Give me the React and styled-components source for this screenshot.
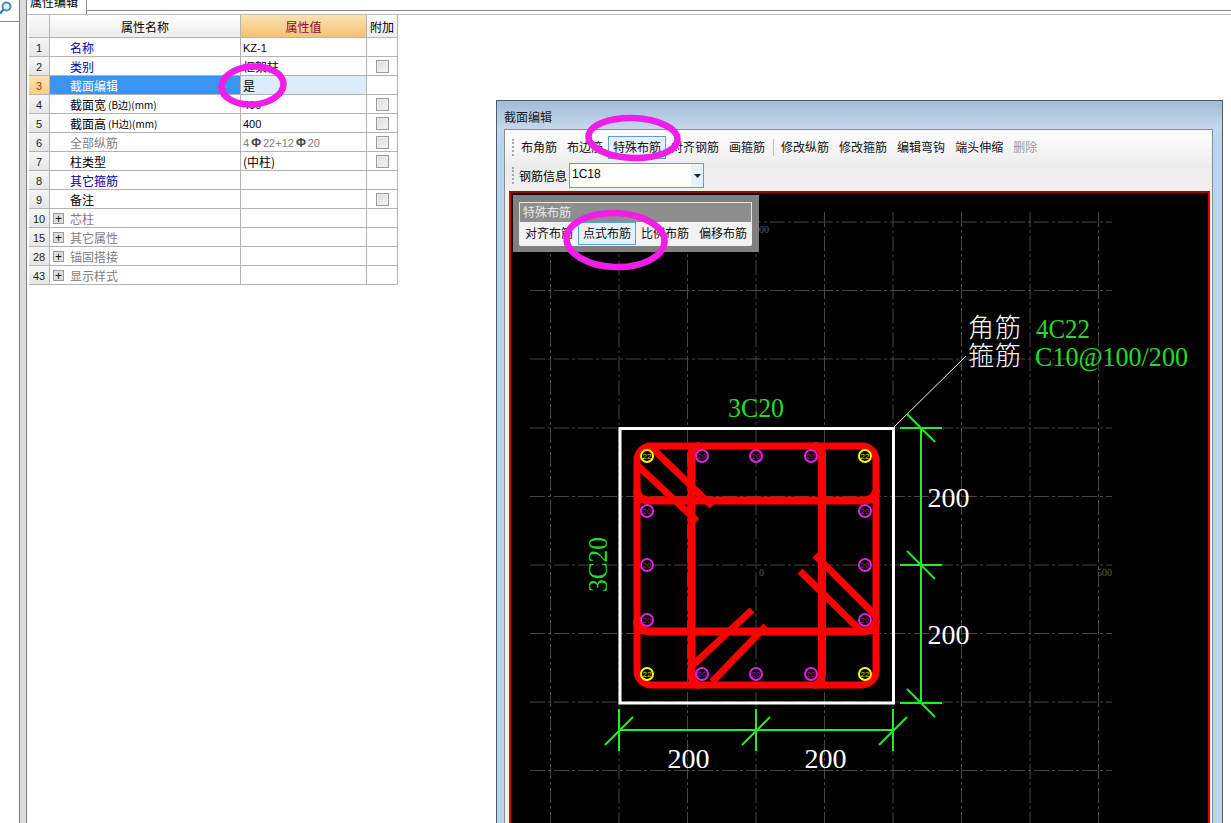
import styled, { createGlobalStyle } from "styled-components";

const CJK = `"Noto Sans CJK SC", "Liberation Sans", sans-serif`;
const LATIN = `"Liberation Sans", sans-serif`;

const GlobalStyle = createGlobalStyle`
  html, body {
    margin: 0;
    padding: 0;
    background: #fff;
    overflow: hidden;
  }
  * { box-sizing: border-box; }
`;

const rows = [
  { no: "1", name: "名称", tone: "link", value: "KZ-1", latin: true },
  { no: "2", name: "类别", tone: "link", value: "框架柱", check: true },
  { no: "3", name: "截面编辑", selected: true, value: "是" },
  { no: "4", name: "截面宽", unit: "(B边)(mm)", value: "400", latin: true, check: true },
  { no: "5", name: "截面高", unit: "(H边)(mm)", value: "400", latin: true, check: true },
  { no: "6", name: "全部纵筋", tone: "muted", rebar: true, check: true },
  { no: "7", name: "柱类型", value: "(中柱)", check: true },
  { no: "8", name: "其它箍筋", tone: "link" },
  { no: "9", name: "备注", check: true },
  { no: "10", name: "芯柱", tone: "muted", group: true },
  { no: "15", name: "其它属性", tone: "muted", group: true },
  { no: "28", name: "锚固搭接", tone: "muted", group: true },
  { no: "43", name: "显示样式", tone: "muted", group: true },
];

const toneColors = { link: "#0000a8", muted: "#808080" };

const firstBar = ["布角筋", "布边筋", "特殊布筋", "对齐钢筋", "画箍筋"];
const secondBar = ["修改纵筋", "修改箍筋", "编辑弯钩", "端头伸缩"];
const panelItems = ["对齐布筋", "点式布筋", "比例布筋", "偏移布筋"];

const gridX = [550.5, 619, 687.5, 756, 824.5, 893, 961.5, 1030, 1098.5];
const gridY = [222, 290.5, 359, 428, 496.5, 565, 633.5, 702, 770.5];
const barX = [647, 702, 756, 811, 865];
const barY = [456, 511, 565, 620, 674];

const bars = barY.flatMap((y, r) =>
  barX
    .map((x, c) => ({ x, y, r, c }))
    .filter((b) => b.r === 0 || b.r === 4 || b.c === 0 || b.c === 4)
);

const stirrupLegs = [
  "M691.5 452V672Q691.5 685 700 685",
  "M822 452V672Q822 685 814 685",
  "M700 446Q691.5 446 691.5 456",
  "M814 446Q822 446 822 456",
  "M650 500.5H862Q876 500.5 876 490",
  "M637 490Q637 500.5 650 500.5",
  "M650 631.5H862Q876 631.5 876 620",
  "M637 620Q637 631.5 650 631.5",
];

const hookLines = [
  [650, 446, 712, 506],
  [637, 465, 697, 521],
  [815, 555, 876, 616],
  [800, 571, 862, 632],
  [752, 610, 693, 665],
  [766, 626, 712, 682],
];

const greenLines = [
  [921, 428, 921, 703],
  [900, 428, 942, 428],
  [900, 565, 942, 565],
  [900, 703, 942, 703],
  [907, 414, 935, 442],
  [907, 551, 935, 579],
  [907, 689, 935, 717],
  [619, 730, 893, 730],
  [619, 709, 619, 751],
  [756, 709, 756, 751],
  [893, 709, 893, 751],
  [605, 745, 633, 717],
  [742, 745, 770, 717],
  [879, 745, 907, 717],
];

const App = () => (
  <>
    <GlobalStyle />
    <Page>
      <SideRail>
        <SearchBox>
          <svg width="14" height="14" viewBox="0 0 14 14">
            <circle cx="6.5" cy="5.5" r="4" fill="#e4f1fb" stroke="#3d8fc4" strokeWidth="2" />
            <path d="M3.5 8.5L0 12.5" stroke="#2f7fb8" strokeWidth="2.4" />
          </svg>
        </SearchBox>
      </SideRail>
      <RailGutter />
      <Main>
        <TabStrip>
          <Tab>属性编辑</Tab>
          <TabLine />
        </TabStrip>
        <Workspace>
          <PropertyGrid>
            <HeadCell $kind="corner" />
            <HeadCell>属性名称</HeadCell>
            <HeadCell $kind="active">属性值</HeadCell>
            <HeadCell>附加</HeadCell>
            {rows.map((row) => (
              <PropertyRow key={row.no} row={row} />
            ))}
          </PropertyGrid>
          <Dialog>
            <DialogTitle>截面编辑</DialogTitle>
            <DialogBody>
              <Toolbar>
                <BarRow>
                  <Grip />
                  {firstBar.map((label) => (
                    <ToolButton key={label} $active={label === "特殊布筋"}>
                      {label}
                    </ToolButton>
                  ))}
                  <BarDivider />
                  {secondBar.map((label) => (
                    <ToolButton key={label}>{label}</ToolButton>
                  ))}
                  <ToolButton $disabled>删除</ToolButton>
                </BarRow>
                <ComboRow>
                  <Grip />
                  <ComboLabel>钢筋信息</ComboLabel>
                  <Combo>
                    <ComboValue>1C18</ComboValue>
                    <ComboArrow>
                      <svg width="7" height="4" viewBox="0 0 7 4">
                        <path d="M0 0H7L3.5 4Z" fill="#222" />
                      </svg>
                    </ComboArrow>
                  </Combo>
                </ComboRow>
              </Toolbar>
              <CanvasFrame>
                <SectionDrawing />
                <FloatPanel>
                  <FloatTitle>特殊布筋</FloatTitle>
                  <FloatItems>
                    {panelItems.map((label) => (
                      <ToolButton key={label} $active={label === "点式布筋"}>
                        {label}
                      </ToolButton>
                    ))}
                  </FloatItems>
                </FloatPanel>
              </CanvasFrame>
            </DialogBody>
          </Dialog>
        </Workspace>
      </Main>
      <Markup width="1231" height="823" viewBox="0 0 1231 823">
        <ellipse cx="252.5" cy="85.5" rx="31" ry="19" transform="rotate(-4 252.5 85.5)" />
        <ellipse cx="633" cy="138" rx="44.5" ry="20" transform="rotate(2 633 138)" />
        <ellipse cx="615.5" cy="240" rx="49" ry="27" transform="rotate(2 615.5 240)" />
      </Markup>
    </Page>
  </>
);

const PropertyRow = ({ row }) => (
  <>
    <NumberCell $selected={row.selected}>{row.no}</NumberCell>
    <NameCell $selected={row.selected} $tone={row.tone}>
      <Expander>{row.group && <PlusBox>+</PlusBox>}</Expander>
      {row.name}
      {row.unit && <UnitText>{row.unit}</UnitText>}
    </NameCell>
    <ValueCell $selected={row.selected} $latin={row.latin}>
      {row.rebar ? (
        <RebarText>
          4<RebarMark>Φ</RebarMark>22+12<RebarMark>Φ</RebarMark>20
        </RebarText>
      ) : (
        row.value
      )}
    </ValueCell>
    <AddCell>{row.check && <CheckBox />}</AddCell>
  </>
);

const SectionDrawing = () => (
  <Drawing width="697" height="630" viewBox="511 193 697 630">
    {gridX.map((x) => (
      <GridLine key={x} x1={x} y1="212" x2={x} y2="823" />
    ))}
    {gridY.map((y) => (
      <GridLine key={y} x1="530" y1={y} x2="1112" y2={y} />
    ))}
    <CadText x="754" y="233" $size={10} $color="#5c5c5c">500</CadText>
    <CadText x="759" y="576" $size={10} $color="#5c5c5c">0</CadText>
    <CadText x="1097" y="576" $size={10} $color="#5c5c5c">500</CadText>

    <line x1="893" y1="428" x2="966" y2="356" stroke="#fff" strokeWidth="1" />
    <rect x="620" y="428.5" width="273.5" height="274.5" fill="none" stroke="#fff" strokeWidth="3" />

    <g fill="none" stroke="#ff0000" strokeWidth="7">
      <rect x="637" y="446" width="239" height="239" rx="14" />
      <g strokeWidth="8">
        {stirrupLegs.map((d) => (
          <path key={d} d={d} />
        ))}
      </g>
      {hookLines.map(([x1, y1, x2, y2]) => (
        <line key={x1 + "-" + y1} x1={x1} y1={y1} x2={x2} y2={y2} />
      ))}
    </g>

    {bars.map((b) => {
      const corner = (b.r === 0 || b.r === 4) && (b.c === 0 || b.c === 4);
      return (
        <g key={b.x + "-" + b.y}>
          <circle cx={b.x} cy={b.y} r="6" fill="#000" stroke={corner ? "#ffff00" : "#e020e0"} strokeWidth="2" />
          <BarText x={b.x} y={b.y + 3} $color={corner ? "#d8d800" : "#a020a0"}>
            {corner ? "22" : "20"}
          </BarText>
        </g>
      );
    })}

    <g stroke="#22ee22" strokeWidth="2">
      {greenLines.map(([x1, y1, x2, y2]) => (
        <line key={x1 + "-" + y1 + "-" + x2} x1={x1} y1={y1} x2={x2} y2={y2} />
      ))}
    </g>

    <CadText x="728" y="416.5" $size={28} $color="#22dd22" textLength="56" lengthAdjust="spacingAndGlyphs">3C20</CadText>
    <CadText x="0" y="0" $size={28} $color="#22dd22" textLength="55" lengthAdjust="spacingAndGlyphs" transform="translate(607 592) rotate(-90)">3C20</CadText>
    <CadText x="667.5" y="768" $size={28} $color="#fff">200</CadText>
    <CadText x="804.5" y="768" $size={28} $color="#fff">200</CadText>
    <CadText x="927.5" y="506.5" $size={28} $color="#fff">200</CadText>
    <CadText x="927.5" y="643.5" $size={28} $color="#fff">200</CadText>

    <CadLabel x="968" y="337">角筋</CadLabel>
    <CadLabel x="968" y="365">箍筋</CadLabel>
    <CadText x="1036" y="338" $size={28} $color="#22dd22" textLength="54" lengthAdjust="spacingAndGlyphs">4C22</CadText>
    <CadText x="1035" y="366" $size={28} $color="#22dd22" textLength="153" lengthAdjust="spacingAndGlyphs">C10@100/200</CadText>
  </Drawing>
);

const Page = styled.div`
  position: relative;
  display: flex;
  width: 1231px;
  height: 823px;
  overflow: hidden;
  background: #fff;
  font-family: ${CJK};
  font-size: 12px;
  color: #000;
`;

const SideRail = styled.div`
  width: 20px;
  flex: none;
  border-right: 1px solid #7f7f7f;
`;

const SearchBox = styled.div`
  height: 21px;
  border-bottom: 1px solid #8a8a8a;
  svg {
    display: block;
    margin-top: 1px;
  }
`;

const RailGutter = styled.div`
  width: 7px;
  flex: none;
  background: #dcdcdc;
  border-right: 1px solid #7f7f7f;
`;

const Main = styled.div`
  flex: 1;
  min-width: 0;
`;

const TabStrip = styled.div`
  display: flex;
  height: 14px;
`;

const Tab = styled.div`
  width: 60px;
  padding-left: 3px;
  border-right: 1px solid #8a8a8a;
  line-height: 3px;
  overflow: hidden;
  font-size: 12px;
`;

const TabLine = styled.div`
  flex: 1;
  height: 11px;
  border-bottom: 1px solid #8a8a8a;
`;

const Workspace = styled.div`
  display: flex;
  align-items: flex-start;
  padding: 0 0 0 2px;
  border-top: 1px solid #bcbcbc;
`;

const PropertyGrid = styled.div`
  display: grid;
  flex: none;
  grid-template-columns: 21px 191px 126px 31px;
  grid-template-rows: 23px repeat(13, 19px);
  width: 369px;
`;

const Cell = styled.div`
  display: flex;
  align-items: center;
  min-width: 0;
  border-right: 1px solid #b4b4b4;
  border-bottom: 1px solid #b4b4b4;
  white-space: nowrap;
`;

const headBackgrounds = {
  corner: "linear-gradient(#fafafa, #ececec)",
  active: "linear-gradient(#fbe2b6, #f5c272)",
};

const HeadCell = styled(Cell)`
  justify-content: center;
  background: ${(p) => headBackgrounds[p.$kind] || "linear-gradient(#fff, #ededed)"};
  color: ${(p) => (p.$kind === "active" ? "#8a0a3c" : "#000")};
`;

const NumberCell = styled(Cell)`
  justify-content: center;
  padding-top: 1px;
  font-family: ${LATIN};
  font-size: 11px;
  color: ${(p) => (p.$selected ? "#a04000" : "#222")};
  background: ${(p) =>
    p.$selected
      ? "linear-gradient(#fde2b4, #f8cd86)"
      : "linear-gradient(#f6f6f6, #e6e6e6)"};
`;

const NameCell = styled(Cell)`
  padding-top: 1px;
  color: ${(p) => (p.$selected ? "#fff" : toneColors[p.$tone] || "#000")};
  background: ${(p) => (p.$selected ? "#3b94ee" : "#fff")};
`;

const UnitText = styled.span`
  margin-left: 2px;
  font-size: 10px;
`;

const Expander = styled.span`
  display: flex;
  flex: none;
  width: 20px;
  padding-left: 3px;
`;

const PlusBox = styled.span`
  display: flex;
  align-items: center;
  justify-content: center;
  width: 11px;
  height: 11px;
  border: 1px solid #9a9a9a;
  background: #dedede;
  font-family: ${LATIN};
  font-size: 12px;
  line-height: 1;
  color: #111;
`;

const ValueCell = styled(Cell)`
  padding: 1px 0 0 2px;
  font-family: ${(p) => (p.$latin ? LATIN : CJK)};
  font-size: ${(p) => (p.$latin ? "11px" : "12px")};
  background: ${(p) => (p.$selected ? "#dcecfb" : "#fff")};
`;

const RebarText = styled.span`
  font-family: ${LATIN};
  font-size: 11px;
  color: #808080;
`;

const RebarMark = styled.span`
  margin: 0 2px;
  font-size: 12px;
  font-weight: 700;
  color: #444;
`;

const AddCell = styled(Cell)`
  justify-content: center;
  background: #fff;
`;

const CheckBox = styled.span`
  display: block;
  width: 13px;
  height: 13px;
  border: 1px solid #9c9c9c;
  background: linear-gradient(135deg, #dcdcdc, #f6f6f6);
  box-shadow: inset 0 0 0 1px #ececec;
`;

const Dialog = styled.div`
  flex: none;
  width: 727px;
  height: 760px;
  margin: 85px 0 0 98px;
  padding: 1px 9px 0 7px;
  border: 1px solid #4f5d69;
  background: linear-gradient(#a3bdd7, #c3d8ec 28px, #b9d5f0 40px);
`;

const DialogTitle = styled.div`
  height: 27px;
  line-height: 30px;
  font-size: 12px;
  color: #1a1a1a;
`;

const DialogBody = styled.div`
  height: 720px;
  border: 1px solid #8c8c8c;
  border-bottom: none;
  background: #f0f0f0;
`;

const Toolbar = styled.div`
  height: 61px;
  padding: 6px 0 0 7px;
  background: linear-gradient(#fff, #ececec 38px, #f0f0f0);
`;

const BarRow = styled.div`
  display: flex;
  align-items: center;
  height: 23px;
`;

const ComboRow = styled(BarRow)`
  height: 25px;
  margin-top: 4px;
`;

const Grip = styled.span`
  flex: none;
  width: 2px;
  height: 17px;
  margin-right: 2px;
  border-left: 2px dotted #a8a8a8;
`;

const ToolButton = styled.span`
  flex: none;
  height: 23px;
  padding: 0 4px;
  line-height: 19px;
  border: 1px solid ${(p) => (p.$active ? "#5a9fdc" : "transparent")};
  background: ${(p) => (p.$active ? "#e4f1fc" : "transparent")};
  color: ${(p) => (p.$disabled ? "#9a9a9a" : "#111")};
  white-space: nowrap;
`;

const BarDivider = styled.span`
  flex: none;
  width: 1px;
  height: 17px;
  margin: 0 2px 0 3px;
  background: #c4c4c4;
`;

const ComboLabel = styled.span`
  flex: none;
  width: 53px;
  padding-left: 3px;
  white-space: nowrap;
`;

const Combo = styled.div`
  display: flex;
  width: 135px;
  height: 25px;
  border: 1px solid #5a9fdc;
  background: #fff;
`;

const ComboValue = styled.span`
  flex: 1;
  padding-left: 2px;
  line-height: 21px;
  font-family: ${LATIN};
  font-size: 12px;
`;

const ComboArrow = styled.span`
  display: flex;
  align-items: center;
  justify-content: center;
  width: 12px;
  background: #e6f1fa;
`;

const CanvasFrame = styled.div`
  position: relative;
  width: 701px;
  margin-left: 4px;
  height: 660px;
  border: 2px solid #e00000;
  border-top-color: #a00000;
  background: #000;
  overflow: hidden;
`;

const Drawing = styled.svg`
  display: block;
`;

const GridLine = styled.line`
  stroke: #474747;
  stroke-width: 1;
  stroke-dasharray: 15 3 3 3;
`;

const CadText = styled.text`
  font-family: "Liberation Serif", serif;
  font-size: ${(p) => p.$size}px;
  fill: ${(p) => p.$color};
`;

const BarText = styled.text`
  font-family: ${LATIN};
  font-size: 8px;
  text-anchor: middle;
  fill: ${(p) => p.$color};
`;

const CadLabel = styled.text`
  font-family: ${CJK};
  font-size: 26px;
  font-weight: 300;
  letter-spacing: 1px;
  fill: #fff;
`;

const FloatPanel = styled.div`
  position: absolute;
  left: 2px;
  top: 2px;
  width: 246px;
  height: 57px;
  padding: 7px 7px 0 6px;
  background: #808080;
`;

const FloatTitle = styled.div`
  height: 20px;
  padding-left: 3px;
  line-height: 18px;
  border: 1px solid #e4e4e4;
  border-bottom: none;
  background: #8e8e8e;
  color: #e8e8e8;
`;

const FloatItems = styled.div`
  display: flex;
  height: 24px;
  padding-left: 1px;
  background: #f2f2f2;
  border-radius: 0 0 2px 2px;
`;

const Markup = styled.svg`
  position: absolute;
  left: 0;
  top: 0;
  pointer-events: none;
  ellipse {
    fill: none;
    stroke: #f01ee6;
    stroke-width: 6.5;
  }
`;

export default App;
